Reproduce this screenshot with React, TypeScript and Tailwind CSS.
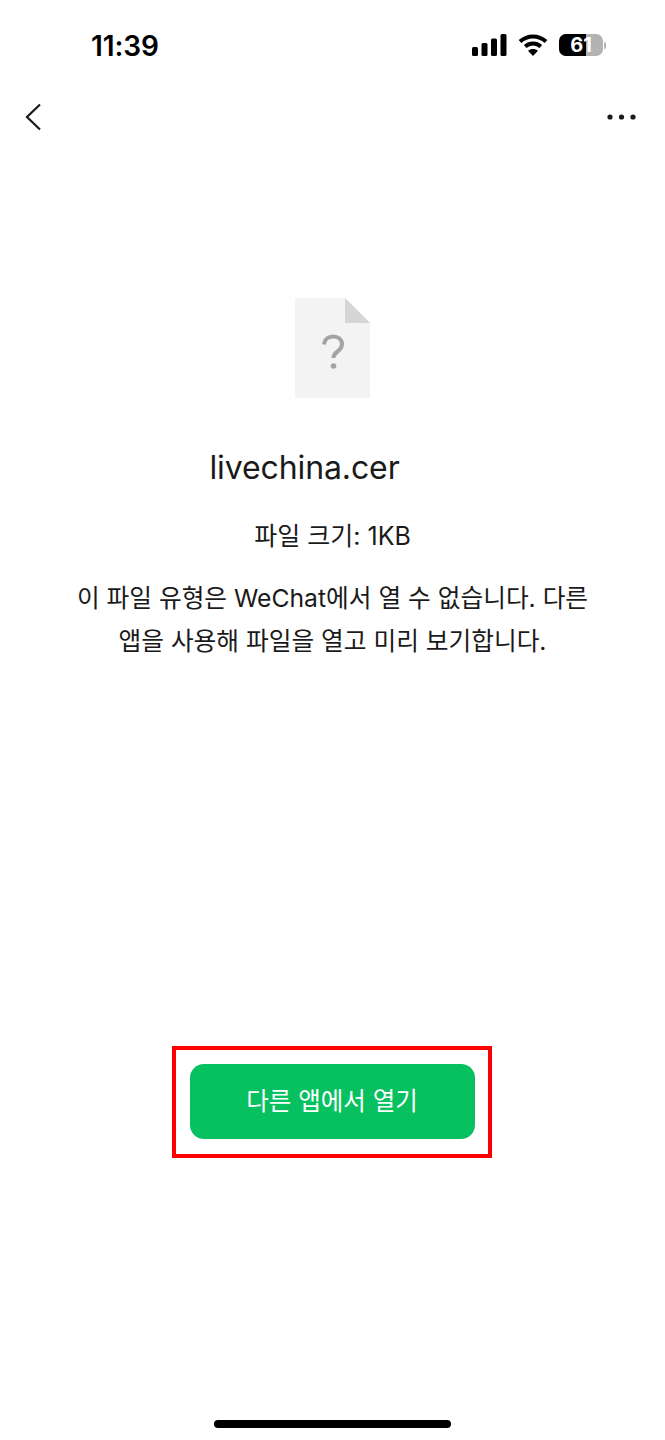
const font = "font-['Inter','Noto_Sans_CJK_KR',sans-serif]";

function StatusIcons() {
  return (
    <div className="flex items-center">
      <svg width="35" height="22" viewBox="0 0 35 22" className="fill-black">
        <rect x="0" y="13" width="6" height="9" rx="1.5" />
        <rect x="9.5" y="9" width="6" height="13" rx="1.5" />
        <rect x="19" y="4.5" width="6" height="17.5" rx="1.5" />
        <rect x="28.5" y="0" width="6" height="22" rx="1.5" />
      </svg>
      <svg width="30" height="22" viewBox="0 0 30 22" className="ml-[11px] fill-none stroke-black">
        <path d="M2 7.6C9.5 .8 20.5 .8 28 7.6" strokeWidth="4" />
        <path d="M7.2 12.6C11.8 8.6 18.2 8.6 22.8 12.6" strokeWidth="4" />
        <path d="M15 22l-5-5.2c2.8-2.4 7.2-2.4 10 0z" className="fill-black stroke-none" />
      </svg>
      <div className="relative ml-[11px] flex h-[22px] w-[44px] overflow-hidden rounded-[7px] bg-[#b3b3b3]">
        <div className="w-[27px] bg-black" />
        <span className="absolute inset-0 flex items-center justify-center font-['Inter',sans-serif] text-[20px] leading-none font-bold text-white">
          61
        </span>
      </div>
      <div className="ml-[1px] h-[7px] w-[2px] rounded-r-full bg-[#b3b3b3]" />
    </div>
  );
}

export default function App() {
  return (
    <div className={`flex h-[1440px] w-[665px] flex-col overflow-hidden bg-white text-[#1a1a1a] ${font}`}>
      <div className="flex h-[90px] items-start justify-between pt-[31px] pr-[59px] pl-[91px]">
        <span className="font-['Inter',sans-serif] text-[28px] leading-[31px] font-semibold tracking-[-0.1px] text-black">11:39</span>
        <div className="pt-[3px]">
          <StatusIcons />
        </div>
      </div>

      <div className="flex h-[54px] items-center justify-between pr-[29px] pl-[25px]">
        <svg width="16" height="28" viewBox="0 0 16 28" className="fill-none stroke-[#1a1a1a]">
          <path d="M15 1.5 2 14l13 12.5" strokeWidth="2.2" />
        </svg>
        <svg width="29" height="6" viewBox="0 0 29 6" className="fill-[#1a1a1a]">
          <circle cx="3" cy="3" r="2.6" />
          <circle cx="14.5" cy="3" r="2.6" />
          <circle cx="26" cy="3" r="2.6" />
        </svg>
      </div>

      <div className="flex flex-col items-center pt-[154px]">
        <svg width="75" height="100" viewBox="0 0 75 100">
          <path d="M0 0H50L75 25V100H0Z" fill="#f3f3f3" />
          <path d="M50 0 75 25H50Z" fill="#d5d5d5" />
          <path
            d="M29 46.5c.5-5 4.300-8 9-8 5.200 0 9 3 9 7.700 0 3.600-2 5.400-4.500 7.300-2.800 2-4 3.500-4 6.500"
            fill="none"
            stroke="#a3a3a3"
            strokeWidth="4"
          />
          <circle cx="38.500" cy="68" r="2.800" fill="#a3a3a3" />
        </svg>

        <h1 className="mt-[50px] pr-[56px] text-[32px] leading-[40px] font-normal tracking-[-0.1px]">livechina.cer</h1>
        <p className="mt-[28px] text-[25px] leading-[40px]">파일 크기: 1KB</p>
        <p className="mt-[21px] w-[580px] text-center text-[24.7px] leading-[43px]">
          이 파일 유형은 WeChat에서 열 수 없습니다. 다른
          <br />
          앱을 사용해 파일을 열고 미리 보기합니다.
        </p>
      </div>

      <div className="mt-[383px] flex justify-center pr-[2px]">
        <div className="flex h-[112px] w-[320px] items-center justify-center border-4 border-[#ff0000] pb-[2px] pl-[1px]">
          <button className="h-[75px] w-[285px] rounded-[14px] bg-[#07c160] text-[24.5px] text-white">
            다른 앱에서 열기
          </button>
        </div>
      </div>

      <div className="mt-auto flex justify-center pb-[12px]">
        <div className="h-[8px] w-[237px] rounded-full bg-black" />
      </div>
    </div>
  );
}
